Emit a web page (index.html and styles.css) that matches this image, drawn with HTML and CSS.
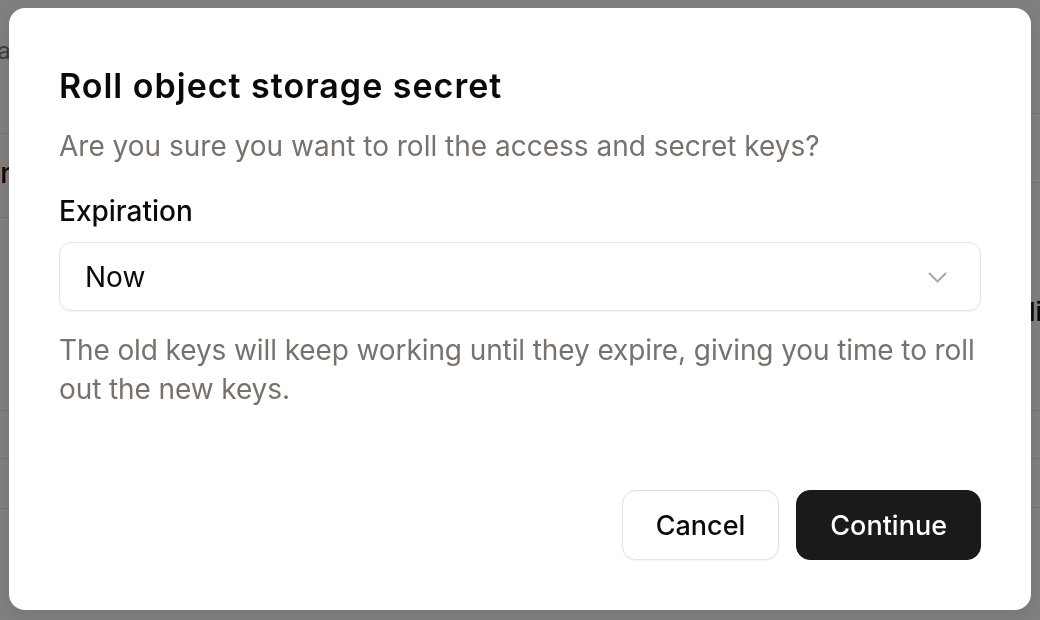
FILE: index.html
```html
<!DOCTYPE html>
<html lang="en">
<head>
<meta charset="utf-8">
<title>Roll object storage secret</title>
<link rel="stylesheet" href="styles.css">
</head>
<body>
<div class="page">
  <div class="col col-left">
    <div class="row r1"><span class="bg-text muted">Pa</span></div>
    <div class="row r2"><span class="bg-text strong">Nn</span></div>
    <div class="row r3"></div>
    <div class="row r4"></div>
    <div class="row r5"></div>
    <div class="row r6"></div>
  </div>
  <div class="col col-right">
    <div class="row q1"></div>
    <div class="row q2"></div>
    <div class="row q3"><span class="bg-text strong right-text">li</span></div>
    <div class="row q4"></div>
    <div class="row q5"></div>
    <div class="row q6"></div>
  </div>
</div>

<div class="dialog" role="dialog" aria-labelledby="dlg-title">
  <h2 class="dialog-title" id="dlg-title">Roll object storage secret</h2>
  <p class="dialog-desc">Are you sure you want to roll the access and secret keys?</p>
  <label class="field-label">Expiration</label>
  <div class="select">
    <span class="select-value">Now</span>
    <svg class="chevron" width="19" height="11" viewBox="0 0 19 11" aria-hidden="true">
      <polyline points="1.5,1.5 9.5,9.5 17.5,1.5" fill="none" stroke="#a8a8a8" stroke-width="2" stroke-linecap="round" stroke-linejoin="round"/>
    </svg>
  </div>
  <p class="help">The old keys will keep working until they expire, giving you time to roll out the new keys.</p>
  <div class="footer">
    <button class="btn btn-secondary">Cancel</button>
    <button class="btn btn-primary">Continue</button>
  </div>
</div>
</body>
</html>
```

FILE: styles.css
```css
* { box-sizing: border-box; }

html, body {
  margin: 0;
  height: 100%;
}

body {
  background: #7f7f7f;
  font-family: Inter, "Noto Sans", "Liberation Sans", sans-serif;
  overflow: hidden;
}

.page {
  display: grid;
  grid-template-columns: 1fr 1fr;
  height: 620px;
}

.col {
  display: flex;
  flex-direction: column;
}

.row {
  border-bottom: 1px solid #747474;
  display: flex;
  align-items: flex-start;
}

.row.r1 { height: 134px; padding-top: 34px; }
.row.r2 { height: 84px; padding-top: 22px; }
.row.r3 { height: 193px; }
.row.r4 { height: 48px; }
.row.r5 { height: 50px; }
.row.r6 { flex: 1; border-bottom: none; }

.row.q1 { height: 114px; }
.row.q2 { height: 69px; }
.row.q3 { height: 228px; justify-content: flex-end; padding-top: 112px; }
.row.q4 { height: 48px; }
.row.q5 { height: 49px; }
.row.q6 { flex: 1; border-bottom: none; }

.bg-text {
  font-size: 28px;
  line-height: 34px;
  margin-left: -21px;
}

.bg-text.muted { color: #3c3c3c; font-size: 24px; margin-left: -18px; }
.bg-text.strong { color: #0a0a0a; font-weight: 500; }
.bg-text.right-text { margin-left: 0; margin-right: -2px; font-size: 26px; }

.dialog {
  position: fixed;
  left: 9px;
  top: 8px;
  width: 1022px;
  height: 602px;
  background: #ffffff;
  border-radius: 16px;
  padding: 58px 50px 50px;
  display: flex;
  flex-direction: column;
  box-shadow: 0 4px 16px rgba(0, 0, 0, 0.08);
}

.dialog-title {
  margin: 0;
  font-size: 34px;
  line-height: 40px;
  font-weight: 600;
  color: #0c0a09;
  letter-spacing: 1px;
}

.dialog-desc {
  margin: 22px 0 0;
  font-size: 28px;
  line-height: 36px;
  color: #78716c;
}

.field-label {
  display: block;
  margin-top: 29px;
  font-size: 28px;
  line-height: 36px;
  font-weight: 500;
  color: #0c0a09;
}

.select {
  margin-top: 13px;
  height: 69px;
  border: 1px solid #e5e5e5;
  border-radius: 12px;
  padding: 0 33px 0 25px;
  display: flex;
  align-items: center;
  justify-content: space-between;
  box-shadow: 0 1px 2px rgba(0, 0, 0, 0.05);
}

.select-value {
  font-size: 28px;
  color: #0c0a09;
}

.chevron { display: block; margin-top: 1px; }

.help {
  margin: 20px -8px 0 0;
  font-size: 28px;
  line-height: 39px;
  letter-spacing: -0.1px;
  color: #78716c;
}

.footer {
  margin-top: auto;
  display: flex;
  justify-content: flex-end;
  gap: 17px;
}

.btn {
  height: 70px;
  border-radius: 14px;
  font-family: inherit;
  font-size: 27px;
  font-weight: 500;
  padding: 0 33px;
  cursor: pointer;
}

.btn-secondary {
  background: #ffffff;
  color: #0c0a09;
  border: 1px solid #e2e2e2;
  box-shadow: 0 1px 2px rgba(0, 0, 0, 0.05);
}

.btn-primary {
  background: #1c1a19;
  color: #ffffff;
  border: 1px solid #1c1a19;
}
```
